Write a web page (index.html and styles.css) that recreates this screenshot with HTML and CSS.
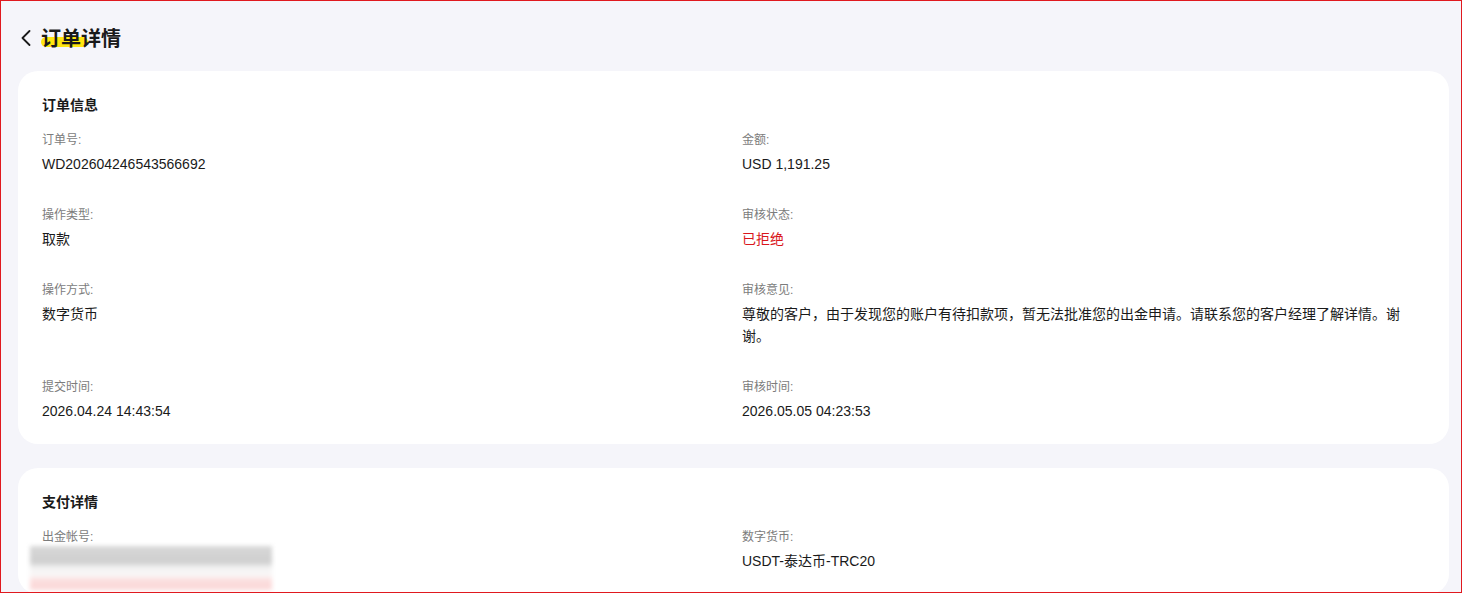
FILE: index.html
```html
<!DOCTYPE html>
<html lang="zh-CN">
<head>
    <meta charset="UTF-8">
    <meta name="viewport" content="width=device-width, initial-scale=1.0">
    <title>订单详情</title>
    <link rel="stylesheet" href="styles.css">
</head>
<body>
    <div class="page">
        <div class="header">
            <svg class="back" width="10" height="16" viewBox="0 0 10 16">
                <path d="M8.5 1 L1.5 8 L8.5 15" fill="none" stroke="#1a1a1a" stroke-width="1.8" stroke-linecap="round" stroke-linejoin="round"/>
            </svg>
            <h1 class="title"><span class="mark"></span>订单详情</h1>
        </div>

        <div class="card">
            <h2 class="card-title">订单信息</h2>
            <div class="fields">
                <div class="field">
                    <div class="label">订单号:</div>
                    <div class="value">WD202604246543566692</div>
                </div>
                <div class="field">
                    <div class="label">金额:</div>
                    <div class="value">USD 1,191.25</div>
                </div>
                <div class="field">
                    <div class="label">操作类型:</div>
                    <div class="value">取款</div>
                </div>
                <div class="field">
                    <div class="label">审核状态:</div>
                    <div class="value rejected">已拒绝</div>
                </div>
                <div class="field">
                    <div class="label">操作方式:</div>
                    <div class="value">数字货币</div>
                </div>
                <div class="field">
                    <div class="label">审核意见:</div>
                    <div class="value">尊敬的客户，由于发现您的账户有待扣款项，暂无法批准您的出金申请。请联系您的客户经理了解详情。谢谢。</div>
                </div>
                <div class="field">
                    <div class="label">提交时间:</div>
                    <div class="value">2026.04.24 14:43:54</div>
                </div>
                <div class="field">
                    <div class="label">审核时间:</div>
                    <div class="value">2026.05.05 04:23:53</div>
                </div>
            </div>
        </div>

        <div class="card">
            <h2 class="card-title">支付详情</h2>
            <div class="fields">
                <div class="field">
                    <div class="label">出金帐号:</div>
                    <div class="value masked"><span class="blur"></span></div>
                </div>
                <div class="field">
                    <div class="label">数字货币:</div>
                    <div class="value">USDT-泰达币-TRC20</div>
                </div>
            </div>
        </div>
    </div>
</body>
</html>
```

FILE: styles.css
```css
html, body {
    margin: 0;
    padding: 0;
}
body {
    font-family: "Liberation Sans", Arial, "Noto Sans CJK SC", sans-serif;
    background-color: #f5f5fa;
    color: #1a1a1a;
}
.page {
    height: 100vh;
    box-sizing: border-box;
    border: 1px solid #e0191f;
    overflow: hidden;
    padding: 0 12px 0 17px;
}
.header {
    display: flex;
    align-items: center;
    gap: 10px;
    height: 28px;
    padding: 23px 0 0 3px;
    margin-bottom: 19px;
}
.back {
    display: block;
}
.title {
    position: relative;
    margin: 0;
    font-family: "Noto Sans CJK SC", sans-serif;
    font-size: 20px;
    line-height: 28px;
    font-weight: 700;
    color: #1a1a1a;
}
.title .mark {
    position: absolute;
    left: 0;
    top: 13px;
    width: 47px;
    height: 10px;
    border-radius: 5px;
    background: #ffe60f;
    z-index: -1;
}
.card {
    background: #fff;
    border-radius: 20px;
    padding: 23px 40px 22px 24px;
    margin-bottom: 24px;
}
.card-title {
    margin: 0 0 17px;
    font-family: "Noto Sans CJK SC", sans-serif;
    font-size: 14px;
    line-height: 20px;
    font-weight: 700;
    color: #1a1a1a;
}
.fields {
    display: grid;
    grid-template-columns: 700px 1fr;
    row-gap: 31px;
}
.label {
    font-size: 12px;
    line-height: 18px;
    color: #7c7c7c;
    margin-bottom: 4px;
}
.value {
    font-size: 14px;
    line-height: 22px;
    color: #1a1a1a;
}
.value.rejected {
    color: #d9171c;
}
.value.masked {
    height: 22px;
    position: relative;
}
.blur {
    position: absolute;
    left: -12px;
    top: -4px;
    width: 242px;
    height: 44px;
    background: linear-gradient(#d8d8d8 0, #cfcfcf 16px, #f4f4f4 22px, #faf6f6 30px, #fcdede 34px, #fbd8d8 44px);
    filter: blur(2px);
}
```
